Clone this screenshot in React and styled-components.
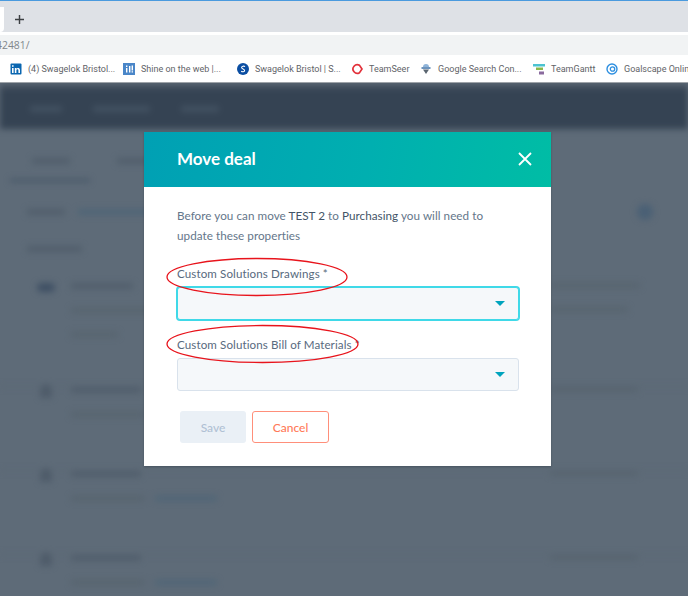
import styled, { createGlobalStyle } from "styled-components";

const GlobalStyle = createGlobalStyle`
  html, body {
    margin: 0;
    height: 100%;
    overflow: hidden;
    background: #5e6b78;
  }
  * {
    box-sizing: border-box;
  }
`;

const Page = styled.div`
  display: flex;
  flex-direction: column;
  width: 688px;
  height: 596px;
  overflow: hidden;
`;

/* browser chrome */
const TabStrip = styled.div`
  display: flex;
  height: 32px;
  padding-top: 6px;
  border-top: 1px solid #4a9ade;
  background: #dee1e6;
`;

const ActiveTabEdge = styled.div`
  width: 4px;
  height: 100%;
  background: #ffffff;
  border-bottom-right-radius: 5px;
`;

const PlusButton = styled.div`
  display: flex;
  align-items: center;
  margin-left: 11px;
  color: #3c4043;
`;

const AddressBar = styled.div`
  display: flex;
  align-items: center;
  height: 23px;
  border-top: 3px solid #ffffff;
  background: #f1f3f4;
  font: 10.4px "Open Sans", sans-serif;
  color: #80868b;
  overflow: hidden;
`;

const AddressText = styled.span`
  margin-left: -4px;
`;

const Bookmarks = styled.div`
  display: flex;
  align-items: center;
  height: 28px;
  padding-left: 10px;
  background: #ffffff;
  border-bottom: 1px solid #9ea3a8;
  overflow: hidden;
  white-space: nowrap;
`;

const Bookmark = styled.div`
  display: flex;
  flex: none;
  align-items: center;
  gap: 6px;
  width: ${(p) => p.$width}px;
  font: 9px Roboto, sans-serif;
  color: #5f6368;
`;

const FavIcon = styled.svg`
  flex: none;
  width: 12px;
  height: 12px;
`;

/* blurred page behind the dialog */
const AppArea = styled.div`
  position: relative;
  flex: 1;
  overflow: hidden;
  background: #5e6b78;
`;

const BlurredPage = styled.div`
  filter: blur(3px);
`;

const NavBar = styled.div`
  display: flex;
  align-items: center;
  gap: 31px;
  height: 46px;
  padding: 6px 0 0 30px;
  background: linear-gradient(#59636f 0, #354353 7px);
`;

const Bar = styled.div`
  flex: none;
  width: ${(p) => p.$w}px;
  height: ${(p) => p.$h || 7}px;
  border-radius: 2px;
  background: ${(p) => p.$color || "#515e6c"};
`;

const Tabs = styled.div`
  display: flex;
  gap: 47px;
  height: 53px;
  padding: 29px 0 0 32px;
`;

const TabUnderline = styled.div`
  width: 80px;
  height: 3px;
  margin: -3px 0 0 10px;
  background: #465667;
`;

const FilterRow = styled.div`
  display: flex;
  align-items: center;
  justify-content: space-between;
  margin-top: 22px;
  padding: 0 35px 0 27px;
`;

const FilterLeft = styled.div`
  display: flex;
  gap: 13px;
`;

const RoundButton = styled.div`
  width: 16px;
  height: 16px;
  border-radius: 50%;
  background: #4a6075;
`;

const DateLabel = styled.div`
  margin: 26px 0 0 27px;
`;

const Row = styled.div`
  display: grid;
  grid-template-columns: 18px 1fr 90px;
  column-gap: 16px;
  height: ${(p) => p.$height}px;
  padding: 0 48px 0 37px;
  border-bottom: 1px solid #596673;
`;

const RowIcon = styled.div`
  width: ${(p) => (p.$wide ? 18 : 12)}px;
  height: ${(p) => (p.$wide ? 9 : 14)}px;
  margin: ${(p) => (p.$wide ? "0" : "-3px 0 0 3px")};
  border-radius: ${(p) => (p.$wide ? "5px" : "6px 6px 2px 2px")};
  background: ${(p) => (p.$wide ? "#3f5064" : "#4f5c6a")};
`;

const RowText = styled.div`
  display: flex;
  flex-direction: column;
  gap: 19px;
`;

const RowLine = styled.div`
  display: flex;
  gap: 10px;
`;

const Rows = styled.div`
  display: flex;
  flex-direction: column;
  margin-top: 31px;
`;

/* dialog */
const Overlay = styled.div`
  position: absolute;
  top: 49px;
  left: 144px;
`;

const Dialog = styled.div`
  display: flex;
  flex-direction: column;
  width: 407px;
  height: 334px;
  background: #ffffff;
  font-family: Lato, sans-serif;
  box-shadow: 0 1px 2px rgba(40, 50, 60, 0.4);
`;

const DialogHeader = styled.div`
  display: flex;
  align-items: center;
  justify-content: space-between;
  height: 55px;
  padding: 0 18px 2px 33px;
  background: linear-gradient(100deg, #00a0b4 0%, #00afb0 55%, #00bda5 100%);
`;

const Title = styled.h2`
  margin: 0;
  font: 700 17px Lato, sans-serif;
  color: #ffffff;
`;

const CloseIcon = styled.svg`
  display: block;
  width: 16px;
  height: 16px;
`;

const DialogBody = styled.div`
  padding: 18px 32px 0 33px;
`;

const Intro = styled.p`
  margin: 0;
  font-size: 11.7px;
  line-height: 20px;
  letter-spacing: 0.04px;
  color: #64768a;
`;

const Strong = styled.span`
  color: #435467;
`;

const Field = styled.div`
  display: flex;
  flex-direction: column;
  margin-top: ${(p) => p.$top}px;
`;

const Label = styled.label`
  height: 20px;
  font-size: 11.6px;
  line-height: 14px;
  letter-spacing: 0.1px;
  color: #586a7e;
`;

const Select = styled.div`
  display: flex;
  align-items: center;
  justify-content: flex-end;
  height: 33px;
  padding-right: 13px;
  border-radius: 3px;
  background: #f5f8fa;
  border: 1px solid ${(p) => (p.$focused ? "#3fd9e8" : "#d9e2ec")};
  box-shadow: ${(p) => (p.$focused ? "0 0 0 1px #3fd9e8" : "none")};
`;

const Caret = styled.div`
  width: 0;
  height: 0;
  border-left: 5px solid transparent;
  border-right: 5px solid transparent;
  border-top: 5px solid #00a4bd;
`;

const Actions = styled.div`
  display: flex;
  gap: 6px;
  margin: 20px 0 0 3px;
`;

const SaveButton = styled.div`
  display: flex;
  align-items: center;
  justify-content: center;
  width: 66px;
  height: 32px;
  border-radius: 3px;
  background: #eaf0f6;
  font-size: 12px;
  font-weight: 500;
  color: #b0c1d4;
`;

const CancelButton = styled.div`
  display: flex;
  align-items: center;
  justify-content: center;
  width: 77px;
  height: 32px;
  border: 1px solid #ff8f7a;
  border-radius: 3px;
  background: #ffffff;
  font-size: 12px;
  font-weight: 500;
  color: #ff7a59;
`;

/* red markup drawn over the screenshot */
const Markup = styled.svg`
  position: absolute;
  top: ${(p) => p.$top}px;
  left: ${(p) => p.$left}px;
  overflow: visible;
  pointer-events: none;
`;

const rows = [
  { height: 104, wide: true, title: 62, right: 90, lines: [[200], [47]], rightLine: 78 },
  { height: 84, title: 70, right: 88, lines: [[74, 62]] },
  { height: 84, title: 70, right: 88, lines: [[74, 62]] },
  { height: 84, title: 70, right: 88, lines: [[74, 62]] },
];

const App = () => (
  <Page>
    <GlobalStyle />
    <TabStrip>
      <ActiveTabEdge />
      <PlusButton>
        <svg width="9" height="9" viewBox="0 0 10 10">
          <path d="M5 0v10M0 5h10" stroke="currentColor" strokeWidth="1.6" />
        </svg>
      </PlusButton>
    </TabStrip>
    <AddressBar>
      <AddressText>42481/</AddressText>
    </AddressBar>
    <Bookmarks>
      <Bookmark $width={113}>
        <FavIcon viewBox="0 0 12 12">
          <rect x="0.5" y="0.5" width="11" height="11" rx="1" fill="#0a66b0" />
          <path d="M2 5h1.6v5H2zM2 2.2h1.6v1.6H2zM4.8 5h1.5v.8c.8-1.3 3.7-1.3 3.7 1.2v3H8.4V7.4c0-1.5-2-1.4-2 0V10H4.8z" fill="#fff" />
        </FavIcon>
        (4) Swagelok Bristol...
      </Bookmark>
      <Bookmark $width={114}>
        <FavIcon viewBox="0 0 12 12">
          <rect width="12" height="12" fill="#4a86c8" />
          <path d="M3 5h1.4v4.500H3zM3 2.500h1.400v1.400H3zM6 3h1.400v6.500H6zM8.600 2.500H10v5H8.600zM8.600 8.200H10v1.300H8.600z" fill="#fff" />
        </FavIcon>
        Shine on the web |...
      </Bookmark>
      <Bookmark $width={114}>
        <FavIcon viewBox="0 0 12 12">
          <circle cx="6" cy="6" r="6" fill="#0b4ea2" />
          <path d="M8 3.600C7 2.800 4.600 3 4.600 4.500c0 1.600 3 1.300 3 3 0 1.500-2.400 1.500-3.400.8" fill="none" stroke="#fff" strokeWidth="1.100" />
        </FavIcon>
        Swagelok Bristol | S...
      </Bookmark>
      <Bookmark $width={69}>
        <FavIcon viewBox="0 0 12 12">
          <path d="M8.500 2.300A4.300 4.300 0 1 0 8.500 9.700L11 6z" fill="none" stroke="#e2303a" strokeWidth="1.700" />
        </FavIcon>
        TeamSeer
      </Bookmark>
      <Bookmark $width={113}>
        <FavIcon viewBox="0 0 12 12">
          <path d="M3 4a3 3 0 0 1 6 0z" fill="#8fb4d9" />
          <rect x="1.500" y="4" width="9" height="2" fill="#6d94bd" />
          <path d="M3 6.500h6L6 11z" fill="#5a6570" />
        </FavIcon>
        Google Search Con...
      </Bookmark>
      <Bookmark $width={73}>
        <FavIcon viewBox="0 0 12 12">
          <rect x="0" y="1" width="12" height="2.500" fill="#4cc3d1" />
          <rect x="3" y="4.500" width="7" height="2.500" fill="#8cb84a" />
          <rect x="6" y="8.500" width="5" height="3" fill="#8a6a9e" />
        </FavIcon>
        TeamGantt
      </Bookmark>
      <Bookmark $width={82}>
        <FavIcon viewBox="0 0 12 12">
          <circle cx="6" cy="6" r="5" fill="none" stroke="#2d8fe0" strokeWidth="1.400" />
          <circle cx="6.500" cy="6" r="2.200" fill="none" stroke="#2d8fe0" strokeWidth="1.300" />
        </FavIcon>
        Goalscape Online
      </Bookmark>
    </Bookmarks>
    <AppArea>
      <BlurredPage>
        <NavBar>
          <Bar $w={32} $h={6} $color="#435262" />
          <Bar $w={57} $h={6} $color="#435262" />
          <Bar $w={38} $h={6} $color="#435262" />
        </NavBar>
        <Tabs>
          <Bar $w={38} $h={6} />
          <Bar $w={38} $h={6} />
        </Tabs>
        <TabUnderline />
        <FilterRow>
          <FilterLeft>
            <Bar $w={38} $h={6} />
            <Bar $w={110} $h={6} $color="#4f6577" />
          </FilterLeft>
          <RoundButton />
        </FilterRow>
        <DateLabel>
          <Bar $w={55} $h={6} />
        </DateLabel>
        <Rows>
          {rows.map((row, i) => (
            <Row key={i} $height={row.height}>
              <RowIcon $wide={row.wide} />
              <RowText>
                <Bar $w={row.title} $h={6} />
                {row.lines.map((parts, j) => (
                  <RowLine key={j}>
                    {parts.map((w, k) => (
                      <Bar key={k} $w={w} $h={5} $color={k === 1 ? "#4f6577" : "#57646f"} />
                    ))}
                  </RowLine>
                ))}
              </RowText>
              <RowText>
                <Bar $w={row.right} $h={5} $color="#57646f" />
                {row.rightLine && <Bar $w={row.rightLine} $h={5} $color="#57646f" />}
              </RowText>
            </Row>
          ))}
        </Rows>
      </BlurredPage>
      <Overlay>
        <Dialog>
          <DialogHeader>
            <Title>Move deal</Title>
            <CloseIcon viewBox="0 0 16 16">
              <path d="M2 2l12 12M14 2L2 14" stroke="#fff" strokeWidth="1.800" fill="none" />
            </CloseIcon>
          </DialogHeader>
          <DialogBody>
            <Intro>
              Before you can move <Strong>TEST 2</Strong> to <Strong>Purchasing</Strong> you will need to update these properties
            </Intro>
            <Field $top={22}>
              <Label>Custom Solutions Drawings *</Label>
              <Select $focused>
                <Caret />
              </Select>
            </Field>
            <Field $top={18}>
              <Label>Custom Solutions Bill of Materials *</Label>
              <Select>
                <Caret />
              </Select>
            </Field>
            <Actions>
              <SaveButton>Save</SaveButton>
              <CancelButton>Cancel</CancelButton>
            </Actions>
          </DialogBody>
        </Dialog>
      </Overlay>
      <Markup $top={174} $left={166} width="182" height="40" viewBox="0 0 182 40">
        <ellipse cx="91" cy="20" rx="90" ry="18.500" fill="none" stroke="#e8141c" strokeWidth="1.300" />
      </Markup>
      <Markup $top={241} $left={166} width="193" height="40" viewBox="0 0 193 40">
        <ellipse cx="96.500" cy="20" rx="95.500" ry="18.500" fill="none" stroke="#e8141c" strokeWidth="1.300" />
      </Markup>
    </AppArea>
  </Page>
);

export default App;
